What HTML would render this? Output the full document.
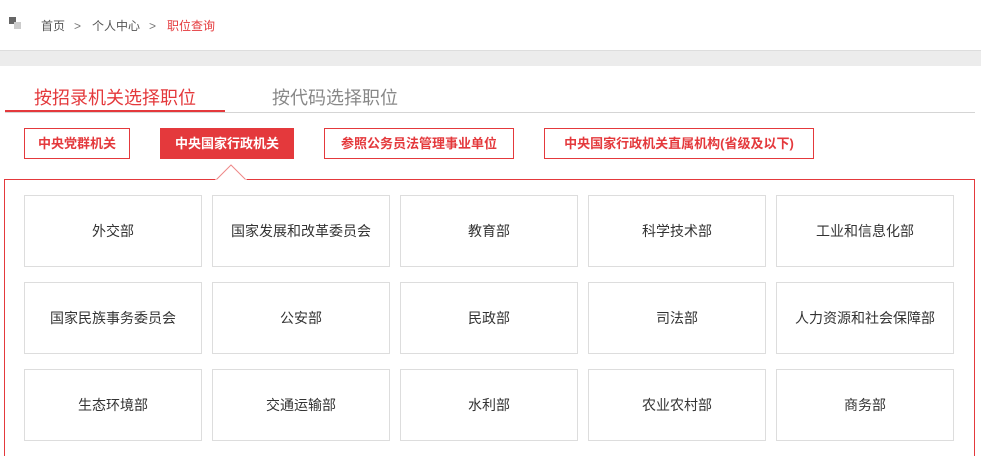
<!DOCTYPE html><html style="height:456px;overflow:hidden"><head><meta charset="utf-8"><style>
*{margin:0;padding:0;box-sizing:border-box}
body{width:981px;height:456px;overflow:hidden;background:#fff;font-family:"Liberation Sans","Noto Sans CJK SC",sans-serif;position:relative}
.a{position:absolute}
.bc{top:17px;font-size:12px;color:#555}
.cell{position:absolute;width:178px;height:72px;border:1px solid #ddd;font-size:14px;color:#333;text-align:center;line-height:70px}
.btn{position:absolute;top:128px;height:31px;border:1px solid #e4393c;color:#e4393c;font-size:13px;font-weight:bold;text-align:center;line-height:29px}
</style></head><body>
<div class="a" style="left:9px;top:17px;width:7px;height:7px;background:#666"></div>
<div class="a" style="left:14px;top:22px;width:7px;height:7px;background:#ccc"></div>
<div class="a bc" style="left:41px">首页</div>
<div class="a bc" style="left:74px;top:19px;color:#777">&gt;</div>
<div class="a bc" style="left:92px">个人中心</div>
<div class="a bc" style="left:149px;top:19px;color:#777">&gt;</div>
<div class="a bc" style="left:167px;color:#e4393c">职位查询</div>
<div class="a" style="left:0;top:50px;width:981px;height:16px;background:#ececec;border-top:1px solid #ddd"></div>
<div class="a" style="left:34px;top:84px;font-size:18px;color:#e4393c">按招录机关选择职位</div>
<div class="a" style="left:272px;top:84px;font-size:18px;color:#888">按代码选择职位</div>
<div class="a" style="left:5px;top:112px;width:970px;height:1px;background:#d5d5d5"></div>
<div class="a" style="left:5px;top:110px;width:220px;height:2px;background:#e4393c"></div>
<div class="btn" style="left:24px;width:106px">中央党群机关</div>
<div class="btn" style="left:160px;width:134px;background:#e4393c;color:#fff">中央国家行政机关</div>
<div class="btn" style="left:324px;width:190px">参照公务员法管理事业单位</div>
<div class="btn" style="left:544px;width:270px">中央国家行政机关直属机构(省级及以下)</div>
<div class="a" style="left:4px;top:179px;width:971px;height:277px;border:1px solid #e4393c;border-bottom:none"></div>
<svg class="a" style="left:215px;top:163px" width="32" height="18"><polygon points="1,17 16,2 31,17" fill="#fff" stroke="#e88" stroke-width="1"/><rect x="0" y="16.5" width="32" height="2" fill="#fff"/></svg>
<div class="cell" style="left:24px;top:195px">外交部</div>
<div class="cell" style="left:212px;top:195px">国家发展和改革委员会</div>
<div class="cell" style="left:400px;top:195px">教育部</div>
<div class="cell" style="left:588px;top:195px">科学技术部</div>
<div class="cell" style="left:776px;top:195px">工业和信息化部</div>
<div class="cell" style="left:24px;top:282px">国家民族事务委员会</div>
<div class="cell" style="left:212px;top:282px">公安部</div>
<div class="cell" style="left:400px;top:282px">民政部</div>
<div class="cell" style="left:588px;top:282px">司法部</div>
<div class="cell" style="left:776px;top:282px">人力资源和社会保障部</div>
<div class="cell" style="left:24px;top:369px">生态环境部</div>
<div class="cell" style="left:212px;top:369px">交通运输部</div>
<div class="cell" style="left:400px;top:369px">水利部</div>
<div class="cell" style="left:588px;top:369px">农业农村部</div>
<div class="cell" style="left:776px;top:369px">商务部</div>
</body></html>
